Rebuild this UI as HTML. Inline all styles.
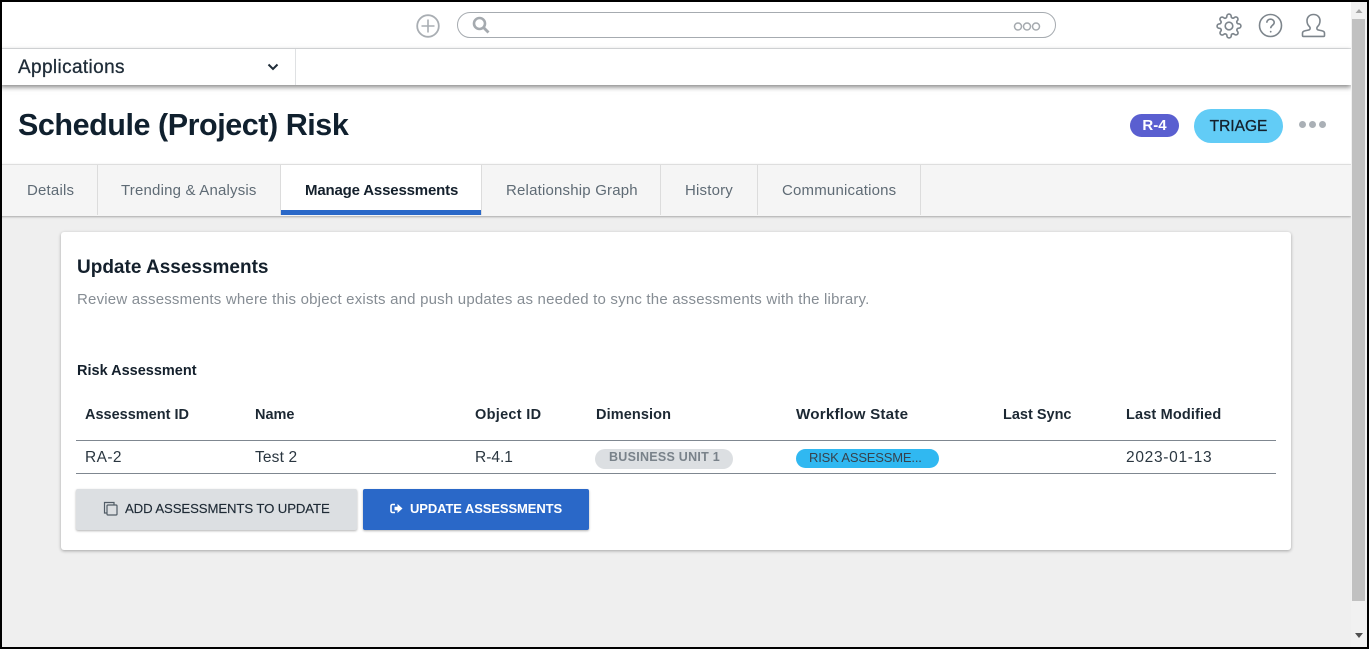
<!DOCTYPE html>
<html><head><meta charset="utf-8">
<style>
html,body{margin:0;padding:0;width:1369px;height:649px;overflow:hidden;background:#fff}
body{position:relative;font-family:"Liberation Sans",sans-serif;color:#14202c}
.a{position:absolute;box-sizing:border-box}
.t{position:absolute;white-space:nowrap;line-height:20px;height:20px}
.tab{position:absolute;box-sizing:border-box;top:165px;height:50px;background:#f5f5f5;border-right:1px solid #dcdcdc}
.tl{color:#5f6b75;font-size:15px;top:181px;letter-spacing:.19px}
.th{font-weight:bold;font-size:14.5px;top:405px;color:#1c2833}
.td{font-size:15.5px;top:448px;color:#2a3640}
</style></head><body>
<!-- main bg -->
<div class="a" style="left:0;top:216px;width:1352px;height:433px;background:#efefef"></div>
<!-- tabs -->
<div class="a" style="left:0;top:164px;width:1351px;height:52px;background:#f5f5f5;border-top:1px solid #dedede;box-shadow:0 1px 2px rgba(0,0,0,.3)"></div>
<div class="tab" style="left:2px;width:96px"></div>
<div class="tab" style="left:98px;width:183px"></div>
<div class="a" style="left:281px;top:165px;width:201px;height:50px;background:#fff;border-right:1px solid #dcdcdc"></div>
<div class="a" style="left:281px;top:210px;width:200px;height:5px;background:#2a68c8"></div>
<div class="tab" style="left:482px;width:179px"></div>
<div class="tab" style="left:661px;width:97px"></div>
<div class="tab" style="left:758px;width:163px"></div>
<div class="t tl" style="left:27px">Details</div>
<div class="t tl" style="left:121px">Trending &amp; Analysis</div>
<div class="t" style="left:305px;top:181px;font-size:15px;font-weight:bold;color:#14202c;letter-spacing:-.17px">Manage Assessments</div>
<div class="t tl" style="left:506px">Relationship Graph</div>
<div class="t tl" style="left:685px">History</div>
<div class="t tl" style="left:782px">Communications</div>
<!-- top bars -->
<div class="a" style="left:0;top:48px;width:1351px;height:1px;background:#e2e4e6"></div>
<div class="a" style="left:0;top:49px;width:1351px;height:36px;background:#fff;box-shadow:0 2px 5px rgba(0,0,0,.5)"></div>
<div class="a" style="left:295px;top:49px;width:1px;height:36px;background:#dfe1e3"></div>
<div class="t" style="left:18px;top:58px;font-size:19px;color:#1f2c38;letter-spacing:.37px;-webkit-text-stroke:.3px #1f2c38">Applications</div>
<svg class="a" style="left:266px;top:62px" width="14" height="10" viewBox="0 0 14 10"><path d="M2.500 2.500L7 7l4.500-4.500" fill="none" stroke="#1f2c38" stroke-width="2"/></svg>
<!-- plus -->
<svg class="a" style="left:415px;top:13px" width="26" height="26" viewBox="0 0 26 26"><circle cx="13" cy="13" r="10.800" fill="none" stroke="#a9aeb3" stroke-width="1.800"/><path d="M13 6.500v13M6.500 13h13" stroke="#a9aeb3" stroke-width="1.600"/></svg>
<!-- search -->
<div class="a" style="left:457px;top:12px;width:599px;height:26px;border:1px solid #a6abb0;border-radius:13px;background:#fff"></div>
<svg class="a" style="left:471px;top:15px" width="20" height="20" viewBox="0 0 20 20"><circle cx="8.500" cy="8.500" r="5.500" fill="none" stroke="#a5aaaf" stroke-width="2.600"/><path d="M12.500 12.500l5 5" stroke="#a5aaaf" stroke-width="2.800"/></svg>
<svg class="a" style="left:1012px;top:20px" width="30" height="12" viewBox="0 0 30 12"><g fill="none" stroke="#a5aaaf" stroke-width="1.500"><circle cx="6" cy="6.500" r="3.500"/><circle cx="15" cy="6.500" r="3.500"/><circle cx="24" cy="6.500" r="3.500"/></g></svg>
<!-- gear -->
<svg class="a" style="left:1216px;top:13px" width="26" height="26" viewBox="0 0 24 24" fill="none" stroke="#7d858c" stroke-width="1.500" stroke-linejoin="round"><circle cx="12" cy="12" r="3.500"/><path d="M19.400 15a1.650 1.650 0 0 0 .33 1.820l.06.06a2 2 0 0 1 0 2.830 2 2 0 0 1-2.830 0l-.06-.06a1.650 1.650 0 0 0-1.820-.33 1.650 1.650 0 0 0-1 1.510V21a2 2 0 0 1-2 2 2 2 0 0 1-2-2v-.09A1.650 1.650 0 0 0 9 19.400a1.650 1.650 0 0 0-1.820.33l-.06.06a2 2 0 0 1-2.830 0 2 2 0 0 1 0-2.830l.06-.06a1.650 1.650 0 0 0 .33-1.820 1.650 1.650 0 0 0-1.510-1H3a2 2 0 0 1-2-2 2 2 0 0 1 2-2h.09A1.650 1.650 0 0 0 4.600 9a1.650 1.650 0 0 0-.33-1.820l-.06-.06a2 2 0 0 1 0-2.830 2 2 0 0 1 2.830 0l.06.06a1.650 1.650 0 0 0 1.820.33H9a1.650 1.650 0 0 0 1-1.510V3a2 2 0 0 1 2-2 2 2 0 0 1 2 2v.09a1.650 1.650 0 0 0 1 1.510 1.650 1.650 0 0 0 1.820-.33l.06-.06a2 2 0 0 1 2.830 0 2 2 0 0 1 0 2.830l-.06.06a1.650 1.650 0 0 0-.33 1.820V9a1.650 1.650 0 0 0 1.510 1H21a2 2 0 0 1 2 2 2 2 0 0 1-2 2h-.09a1.650 1.650 0 0 0-1.510 1z"/></svg>
<!-- help -->
<svg class="a" style="left:1258px;top:13px" width="25" height="25" viewBox="0 0 25 25" fill="none" stroke="#7d858c" stroke-width="1.600"><circle cx="12.500" cy="12.500" r="11"/><path d="M8.800 9.800c0-2.300 1.700-3.600 3.700-3.600s3.700 1.300 3.700 3.300c0 2.800-3.500 2.800-3.500 5.800" /><circle cx="12.700" cy="18.700" r=".9" fill="#7d858c" stroke="none"/></svg>
<!-- user -->
<svg class="a" style="left:1301px;top:13px" width="25" height="25" viewBox="0 0 25 25" fill="none" stroke="#7d858c" stroke-width="1.600" stroke-linejoin="round"><path d="M12.500 1.500c-4 0-6.500 2.800-6.500 6.300 0 2.700 1.300 4.900 2.700 6.100.6.600.6 2.300-.2 2.800-.8.500-3.100.7-4.800 1.200-1.500.4-2.200 1-2.200 2.300v2.300c0 .5.300.9.900.9h20.200c.6 0 .9-.4.900-.9v-2.300c0-1.300-.7-1.900-2.200-2.300-1.700-.5-4-.7-4.800-1.200-.8-.5-.8-2.200-.2-2.800 1.400-1.200 2.700-3.400 2.700-6.100 0-3.500-2.500-6.300-6.500-6.300z"/></svg>
<!-- title -->
<div class="t" style="left:18px;top:104px;height:42px;line-height:42px;font-size:30.500px;font-weight:bold;color:#10202e;letter-spacing:-.45px">Schedule (Project) Risk</div>
<div class="a" style="left:1130px;top:114px;width:49px;height:23px;border-radius:12px;background:#5a5fd0;color:#fff;font-weight:bold;font-size:15px;line-height:23px;text-align:center">R-4</div>
<div class="a" style="left:1194px;top:109px;width:89px;height:34px;border-radius:17px;background:#62ccf6;color:#14202c;font-size:15.500px;line-height:35px;text-align:center;-webkit-text-stroke:.3px #14202c">TRIAGE</div>
<div class="a" style="left:1299px;top:121px;width:7px;height:7px;border-radius:50%;background:#aab0b6"></div>
<div class="a" style="left:1309px;top:121px;width:7px;height:7px;border-radius:50%;background:#aab0b6"></div>
<div class="a" style="left:1319px;top:121px;width:7px;height:7px;border-radius:50%;background:#aab0b6"></div>
<!-- card -->
<div class="a" style="left:61px;top:232px;width:1230px;height:318px;background:#fff;border-radius:3px;box-shadow:0 1px 3px rgba(0,0,0,.32)"></div>
<div class="t" style="left:77px;top:258px;font-size:19px;font-weight:bold;color:#14202c">Update Assessments</div>
<div class="t" style="left:77px;top:290px;font-size:15px;color:#868d94;letter-spacing:.2px">Review assessments where this object exists and push updates as needed to sync the assessments with the library.</div>
<div class="t" style="left:77px;top:361px;font-size:14.500px;font-weight:bold;color:#14202c">Risk Assessment</div>
<div class="t th" style="left:85px">Assessment ID</div>
<div class="t th" style="left:255px">Name</div>
<div class="t th" style="left:475px;letter-spacing:.3px">Object ID</div>
<div class="t th" style="left:596px;letter-spacing:.1px">Dimension</div>
<div class="t th" style="left:796px;font-size:15.200px;letter-spacing:.2px">Workflow State</div>
<div class="t th" style="left:1003px">Last Sync</div>
<div class="t th" style="left:1126px;letter-spacing:.15px">Last Modified</div>
<div class="a" style="left:76px;top:440px;width:1200px;height:1px;background:#7f8790"></div>
<div class="a" style="left:76px;top:473px;width:1200px;height:1px;background:#7f8790"></div>
<div class="t td" style="left:85px;letter-spacing:.4px">RA-2</div>
<div class="t td" style="left:255px;letter-spacing:.15px">Test 2</div>
<div class="t td" style="left:475px">R-4.1</div>
<div class="t td" style="left:1126px;letter-spacing:.7px">2023-01-13</div>
<div class="a" style="left:595px;top:449px;width:138px;height:20px;border-radius:10px;background:#dcdfe2;color:#79828a;font-size:12.500px;font-weight:bold;line-height:17px;padding-left:14px;white-space:nowrap;letter-spacing:.27px">BUSINESS UNIT 1</div>
<div class="a" style="left:796px;top:449px;width:143px;height:19px;border-radius:10px;background:#30b8f1;color:#36424d;font-size:13px;line-height:17px;padding-left:13px;white-space:nowrap;letter-spacing:-.18px">RISK ASSESSME...</div>
<!-- buttons -->
<div class="a" style="left:76px;top:489px;width:281px;height:41px;background:#dcdfe2;border-radius:2px;box-shadow:0 1px 2px rgba(0,0,0,.3)"></div>
<svg class="a" style="left:103px;top:501px" width="15" height="15" viewBox="0 0 15 15" fill="none" stroke="#515c66" stroke-width="1.200"><path d="M3.500 12H1.500V1.500H11V3.500"/><rect x="4" y="4" width="10" height="10" rx="1"/></svg>
<div class="t" style="left:125px;top:499px;font-size:13.200px;color:#1f2b36;letter-spacing:-.11px;-webkit-text-stroke:.15px #1f2b36">ADD ASSESSMENTS TO UPDATE</div>
<div class="a" style="left:363px;top:489px;width:226px;height:41px;background:#2a68c8;border-radius:2px;box-shadow:0 1px 2px rgba(0,0,0,.3)"></div>
<svg class="a" style="left:390px;top:503px" width="13" height="11" viewBox="0 0 13 11"><path d="M5 1.500H2.500a1.500 1.500 0 0 0-1.500 1.500v5a1.500 1.500 0 0 0 1.500 1.500H5" fill="none" stroke="#fff" stroke-width="1.600"/><path d="M4.500 3.800H7.500V1l5 4.500-5 4.500V7.200H4.500z" fill="#fff"/></svg>
<div class="t" style="left:410px;top:499px;font-size:13px;font-weight:bold;color:#fff;letter-spacing:-.1px">UPDATE ASSESSMENTS</div>
<!-- scrollbar -->
<div class="a" style="left:1351px;top:0;width:16px;height:649px;background:#f1f1f1"></div>
<div class="a" style="left:1352px;top:19px;width:13px;height:582px;background:#c1c1c1"></div>
<svg class="a" style="left:1353px;top:6px" width="12" height="8"><path d="M2.500 7L6 3l3.500 4z" fill="#a5a5a5"/></svg>
<svg class="a" style="left:1353px;top:632px" width="12" height="8"><path d="M2 1h8L6 6z" fill="#505050"/></svg>
<!-- window border -->
<div class="a" style="left:0;top:0;width:1369px;height:2px;background:#000"></div>
<div class="a" style="left:0;top:647px;width:1369px;height:2px;background:#000"></div>
<div class="a" style="left:0;top:0;width:2px;height:649px;background:#000"></div>
<div class="a" style="left:1367px;top:0;width:2px;height:649px;background:#000"></div>
</body></html>
